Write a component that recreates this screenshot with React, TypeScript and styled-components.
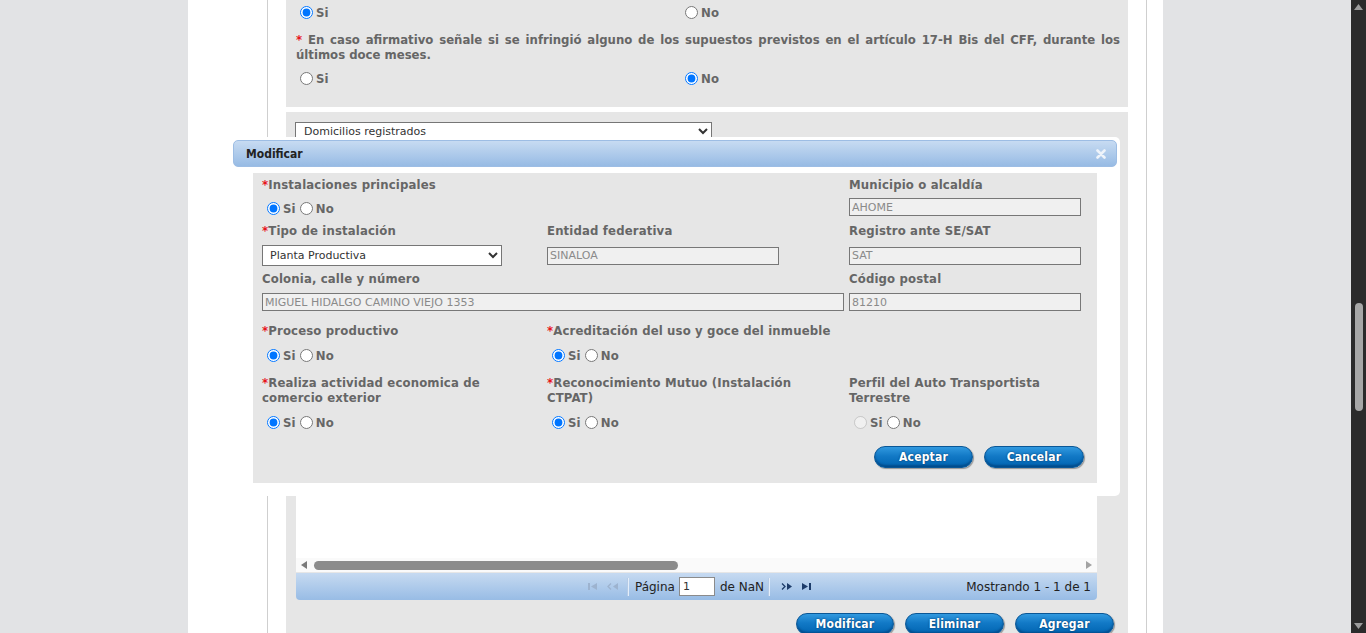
import React from "react";
import styled, { createGlobalStyle } from "styled-components";

const GlobalStyle = createGlobalStyle`
  html, body { margin: 0; padding: 0; height: 100%; overflow: hidden; }
  body {
    font-family: "DejaVu Sans Condensed", "DejaVu Sans", sans-serif;
    font-stretch: condensed;
    color: #666;
  }
  * { box-sizing: border-box; }
`;

const FONT = `"DejaVu Sans Condensed", "DejaVu Sans", sans-serif`;
const FONT_N = `"DejaVu Sans", sans-serif`;

const Frame = styled.div`
  display: flex;
  width: 1366px;
  height: 633px;
  overflow: hidden;
  background: #e2e3e5;
`;

const Viewport = styled.div`
  position: relative;
  flex: 1;
  display: flex;
  justify-content: center;
  overflow: hidden;
`;

const Column = styled.div`
  width: 975px;
  height: 100%;
  background: #fff;
  padding: 0 16px 0 79px;
`;

const Container = styled.div`
  height: 100%;
  border-left: 1px solid #cfcfcf;
  border-right: 1px solid #cfcfcf;
  padding: 0 18px;
  display: flex;
  flex-direction: column;
`;

const TopSection = styled.div`
  background: #e6e6e6;
  padding: 3px 8px 20px 9px;
`;

const ChoiceRow = styled.div<{ $mt?: number }>`
  display: grid;
  grid-template-columns: 385px 1fr;
  align-items: center;
  height: 18px;
  margin-top: ${(p) => p.$mt ?? 0}px;
`;

const Option = styled.label`
  display: inline-flex;
  align-items: center;
  font: bold 13px ${FONT};
  font-stretch: condensed;
  letter-spacing: 0.15px;
  color: #666;
  line-height: 15px;
`;

const Radio = styled.input.attrs({ type: "radio" })`
  width: 13px;
  height: 13px;
  margin: 0 3px 0 5px;
`;

const Notice = styled.p`
  margin: 11px 0 0 1px;
  font: bold 13px/15px ${FONT};
  font-stretch: condensed;
  color: #666;
  text-align: justify;
`;

const Req = styled.span`
  color: #e8141a;
`;

const MainSection = styled.div`
  flex: 1;
  margin-top: 5px;
  background: #e6e6e6;
  padding: 10px 14px 0 9px;
  display: flex;
  flex-direction: column;
`;

const AddressSelect = styled.select`
  width: 417px;
  height: 18px;
  border: 1px solid #767676;
  background: #fff;
  font: 11px ${FONT_N};
  color: #333;
  padding: 0 4px;
`;

const Grid = styled.div`
  margin: 10px 0 0 1px;
  width: 801px;
  display: flex;
  flex-direction: column;
`;

const GridBody = styled.div`
  height: 408px;
  background: #fff;
`;

const HScroll = styled.div`
  height: 14px;
  background: #fafafa;
  display: flex;
  align-items: center;
  padding: 0 5px 0 5px;
`;

const HThumb = styled.div`
  width: 364px;
  height: 9px;
  margin-left: 7px;
  border-radius: 5px;
  background: #8c8c8c;
`;

const Spacer = styled.div`
  flex: 1;
`;

const Pager = styled.div`
  height: 27px;
  margin-top: 1px;
  border-radius: 0 0 4px 4px;
  background: linear-gradient(to bottom, #c6daf1, #98bce5);
  display: grid;
  grid-template-columns: 1fr auto 1fr;
  align-items: center;
  font: 12px ${FONT_N};
  color: #222;
`;

const PagerCenter = styled.div`
  display: flex;
  align-items: center;
  margin-left: 6px;
`;

const PagerIcon = styled.span`
  display: inline-flex;
  width: 20px;
  justify-content: center;
  align-items: center;
`;

const PagerSep = styled.span`
  width: 2px;
  height: 18px;
  margin: 0 6px 0 4px;
  background: #b5cbe6;
  border-right: 1px solid #e4eefa;
`;

const PageInput = styled.input`
  width: 36px;
  height: 19px;
  margin: 0 5px 0 4px;
  border: 1px solid #8b8b8b;
  background: #fff;
  font: 11px ${FONT_N};
  color: #333;
  padding: 0 3px;
`;

const PagerInfo = styled.span`
  justify-self: end;
  padding-right: 6px;
`;

const ButtonRow = styled.div<{ $mt: number }>`
  display: flex;
  justify-content: flex-end;
  gap: 11px;
  margin-top: ${(p) => p.$mt}px;
`;

const BlueButton = styled.button<{ $w: number }>`
  width: ${(p) => p.$w}px;
  height: 22px;
  border-radius: 12px;
  border: 1px solid #0a5796;
  background: linear-gradient(to bottom, #3199df 0%, #1279c6 45%, #0064b1 100%);
  box-shadow: inset 0 -2px 2px rgba(0, 30, 70, 0.35), 1px 1px 1px rgba(0, 0, 0, 0.35);
  color: #fff;
  font: bold 12px ${FONT};
  font-stretch: condensed;
  letter-spacing: 0.2px;
  text-shadow: 0 0 2px #02325e;
  padding: 0;
`;

const Dialog = styled.div`
  position: absolute;
  left: 230px;
  top: 137px;
  width: 890px;
  background: #fff;
  border-radius: 5px;
  padding: 3px 3px 13px 3px;
`;

const DialogHeader = styled.div`
  height: 27px;
  border: 1px solid #9dbde4;
  border-radius: 5px;
  background: linear-gradient(to bottom, #c7dbf2, #97bbe4);
  display: flex;
  align-items: center;
  justify-content: space-between;
  padding: 0 10px 0 12px;
  font: bold 12px ${FONT};
  font-stretch: condensed;
  color: #222;
`;

const FormPanel = styled.div`
  margin: 6px 20px 0 20px;
  background: #e6e6e6;
  padding: 4px 13px 15px 9px;
`;

const FormRow = styled.div<{ $mt: number }>`
  display: grid;
  grid-template-columns: 285px 302px 1fr;
  margin-top: ${(p) => p.$mt}px;
  align-items: start;
`;

const Field = styled.div<{ $span?: number }>`
  display: flex;
  flex-direction: column;
  grid-column: span ${(p) => p.$span ?? 1};
`;

const Label = styled.div`
  font: bold 13px/15px ${FONT};
  font-stretch: condensed;
  letter-spacing: 0.15px;
  color: #666;
  white-space: nowrap;
`;

const Slot = styled.div<{ $mt: number; $h: number }>`
  display: flex;
  align-items: center;
  margin-top: ${(p) => p.$mt}px;
  height: ${(p) => p.$h}px;
`;

const RadioGroup = styled.div`
  display: flex;
  align-items: center;
  & > label + label input {
    margin-left: 4px;
  }
`;

const OptText = styled.span<{ $muted?: boolean }>`
  color: ${(p) => (p.$muted ? "#666" : "inherit")};
`;

const ReadInput = styled.input<{ $w: number }>`
  width: ${(p) => p.$w}px;
  height: 18px;
  border: 1px solid #777;
  background: #f0f0f0;
  font: 11px ${FONT_N};
  color: #8a8a8a;
  padding: 0 2px;
`;

const TypeSelect = styled.select`
  width: 240px;
  height: 21px;
  border: 1px solid #767676;
  background: #fff;
  font: 11px ${FONT_N};
  color: #333;
  padding: 0 3px;
`;

const Tri = ({ dir, color }: { dir: "l" | "r"; color: string }) => (
  <svg width="6" height="8" viewBox="0 0 6 8">
    <polygon points={dir === "l" ? "6,0 6,8 0,4" : "0,0 0,8 6,4"} fill={color} />
  </svg>
);

const VTri = ({ dir }: { dir: "u" | "d" }) => (
  <svg width="9" height="6" viewBox="0 0 9 6">
    <polygon points={dir === "u" ? "0,6 9,6 4.5,0" : "0,0 9,0 4.5,6"} fill="#9c9c9c" />
  </svg>
);

const FirstIcon = ({ color }: { color: string }) => (
  <svg width="9" height="7" viewBox="0 0 9 7">
    <rect x="0" y="0" width="2" height="7" fill={color} />
    <polygon points="9,0 9,7 3,3.5" fill={color} />
  </svg>
);
const LastIcon = ({ color }: { color: string }) => (
  <svg width="9" height="7" viewBox="0 0 9 7">
    <polygon points="0,0 0,7 6,3.5" fill={color} />
    <rect x="7" y="0" width="2" height="7" fill={color} />
  </svg>
);
const PrevIcon = ({ color }: { color: string }) => (
  <svg width="11" height="7" viewBox="0 0 11 7">
    <polyline points="4,0.5 1,3.5 4,6.5" fill="none" stroke={color} strokeWidth="1.3" />
    <polygon points="11,0 11,7 6,3.5" fill={color} />
  </svg>
);
const NextIcon = ({ color }: { color: string }) => (
  <svg width="11" height="7" viewBox="0 0 11 7">
    <polyline points="1,0.5 4,3.5 1,6.5" fill="none" stroke={color} strokeWidth="1.3" />
    <polygon points="6,0 6,7 11,3.5" fill={color} />
  </svg>
);

const VScroll = styled.div`
  width: 15px;
  height: 100%;
  background: #2b2b2b;
  display: flex;
  flex-direction: column;
  align-items: center;
  padding: 4px 0 4px;
`;

const VThumb = styled.div`
  width: 8px;
  height: 108px;
  margin-top: 293px;
  border-radius: 4px;
  background: #a7a7a7;
`;

const CloseIcon = () => (
  <svg width="10" height="10" viewBox="0 0 10 10">
    <path d="M1.5 1.5 L8.5 8.5 M8.5 1.5 L1.5 8.5" stroke="#eef3fa" strokeWidth="2.6" strokeLinecap="round" />
  </svg>
);

type YN = "si" | "no" | "none";

const YesNo = ({ name, value, disabledSi }: { name: string; value: YN; disabledSi?: boolean }) => (
  <RadioGroup>
    <Option>
      <Radio name={name} defaultChecked={value === "si"} disabled={disabledSi} />
      <OptText $muted={disabledSi}>Si</OptText>
    </Option>
    <Option>
      <Radio name={name} defaultChecked={value === "no"} />
      No
    </Option>
  </RadioGroup>
);

export default function App() {
  return (
    <Frame>
      <GlobalStyle />
      <Viewport>
        <Column>
          <Container>
            <TopSection>
              <ChoiceRow>
                <Option>
                  <Radio name="q1" defaultChecked />
                  Si
                </Option>
                <Option>
                  <Radio name="q1" />
                  No
                </Option>
              </ChoiceRow>
              <Notice>
                <Req>* </Req>En caso afirmativo señale si se infringió alguno de los supuestos previstos en el
                artículo 17-H Bis del CFF, durante los últimos doce meses.
              </Notice>
              <ChoiceRow $mt={7}>
                <Option>
                  <Radio name="q2" />
                  Si
                </Option>
                <Option>
                  <Radio name="q2" defaultChecked />
                  No
                </Option>
              </ChoiceRow>
            </TopSection>
            <MainSection>
              <AddressSelect defaultValue="d">
                <option value="d">Domicilios registrados</option>
              </AddressSelect>
              <Grid>
                <GridBody />
                <HScroll>
                  <Tri dir="l" color="#7a7a7a" />
                  <HThumb />
                  <Spacer />
                  <Tri dir="r" color="#a3a3a3" />
                </HScroll>
                <Pager>
                  <span />
                  <PagerCenter>
                    <PagerIcon>
                      <FirstIcon color="#9db3cf" />
                    </PagerIcon>
                    <PagerIcon>
                      <PrevIcon color="#9db3cf" />
                    </PagerIcon>
                    <PagerSep />
                    Página
                    <PageInput defaultValue="1" />
                    de NaN
                    <PagerSep />
                    <PagerIcon>
                      <NextIcon color="#1d3c6a" />
                    </PagerIcon>
                    <PagerIcon>
                      <LastIcon color="#1d3c6a" />
                    </PagerIcon>
                  </PagerCenter>
                  <PagerInfo>Mostrando 1 - 1 de 1</PagerInfo>
                </Pager>
              </Grid>
              <ButtonRow $mt={13}>
                <BlueButton $w={98}>Modificar</BlueButton>
                <BlueButton $w={99}>Eliminar</BlueButton>
                <BlueButton $w={99}>Agregar</BlueButton>
              </ButtonRow>
            </MainSection>
          </Container>
        </Column>

        <Dialog>
          <DialogHeader>
            <span>Modificar</span>
            <CloseIcon />
          </DialogHeader>
          <FormPanel>
            <FormRow $mt={0}>
              <Field>
                <Label>
                  <Req>*</Req>Instalaciones principales
                </Label>
                <Slot $mt={7} $h={18}>
                  <YesNo name="f1" value="si" />
                </Slot>
              </Field>
              <Field />
              <Field>
                <Label>Municipio o alcaldía</Label>
                <Slot $mt={6} $h={18}>
                  <ReadInput $w={232} readOnly defaultValue="AHOME" />
                </Slot>
              </Field>
            </FormRow>
            <FormRow $mt={6}>
              <Field>
                <Label>
                  <Req>*</Req>Tipo de instalación
                </Label>
                <Slot $mt={7} $h={21}>
                  <TypeSelect defaultValue="pp">
                    <option value="pp">Planta Productiva</option>
                  </TypeSelect>
                </Slot>
              </Field>
              <Field>
                <Label>Entidad federativa</Label>
                <Slot $mt={7} $h={21}>
                  <ReadInput $w={232} readOnly defaultValue="SINALOA" />
                </Slot>
              </Field>
              <Field>
                <Label>Registro ante SE/SAT</Label>
                <Slot $mt={7} $h={21}>
                  <ReadInput $w={232} readOnly defaultValue="SAT" />
                </Slot>
              </Field>
            </FormRow>
            <FormRow $mt={5}>
              <Field $span={2}>
                <Label>Colonia, calle y número</Label>
                <Slot $mt={7} $h={18}>
                  <ReadInput $w={582} readOnly defaultValue="MIGUEL HIDALGO CAMINO VIEJO 1353" />
                </Slot>
              </Field>
              <Field>
                <Label>Código postal</Label>
                <Slot $mt={7} $h={18}>
                  <ReadInput $w={232} readOnly defaultValue="81210" />
                </Slot>
              </Field>
            </FormRow>
            <FormRow $mt={12}>
              <Field>
                <Label>
                  <Req>*</Req>Proceso productivo
                </Label>
                <Slot $mt={8} $h={18}>
                  <YesNo name="f2" value="si" />
                </Slot>
              </Field>
              <Field>
                <Label>
                  <Req>*</Req>Acreditación del uso y goce del inmueble
                </Label>
                <Slot $mt={8} $h={18}>
                  <YesNo name="f3" value="si" />
                </Slot>
              </Field>
            </FormRow>
            <FormRow $mt={11}>
              <Field>
                <Label>
                  <Req>*</Req>Realiza actividad economica de
                  <br />
                  comercio exterior
                </Label>
                <Slot $mt={8} $h={18}>
                  <YesNo name="f4" value="si" />
                </Slot>
              </Field>
              <Field>
                <Label>
                  <Req>*</Req>Reconocimiento Mutuo (Instalación
                  <br />
                  CTPAT)
                </Label>
                <Slot $mt={8} $h={18}>
                  <YesNo name="f5" value="si" />
                </Slot>
              </Field>
              <Field>
                <Label>
                  Perfil del Auto Transportista
                  <br />
                  Terrestre
                </Label>
                <Slot $mt={8} $h={18}>
                  <YesNo name="f6" value="none" disabledSi />
                </Slot>
              </Field>
            </FormRow>
            <ButtonRow $mt={15}>
              <BlueButton $w={99}>Aceptar</BlueButton>
              <BlueButton $w={100}>Cancelar</BlueButton>
            </ButtonRow>
          </FormPanel>
        </Dialog>
      </Viewport>
      <VScroll>
        <VTri dir="u" />
        <VThumb />
        <Spacer />
        <VTri dir="d" />
      </VScroll>
    </Frame>
  );
}
